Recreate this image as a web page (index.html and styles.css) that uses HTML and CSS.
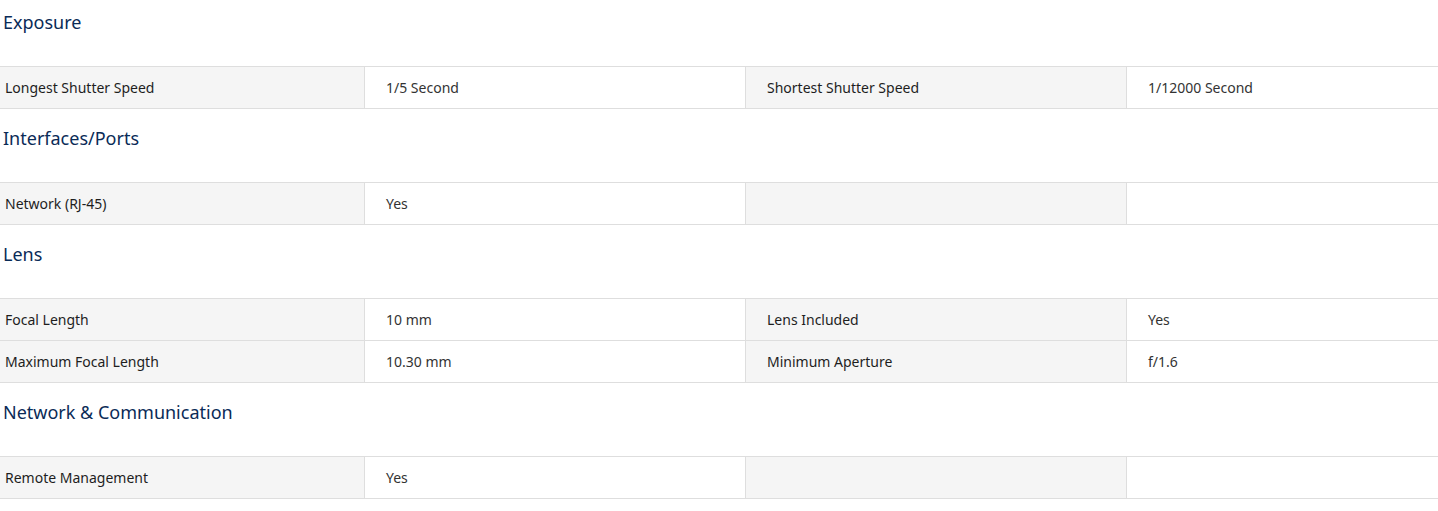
FILE: index.html
```html
<!DOCTYPE html>
<html lang="en">
<head>
<meta charset="utf-8">
<title>Specifications</title>
<link rel="stylesheet" href="styles.css">
</head>
<body>
<div class="specs">
  <section class="group">
    <h3 class="group-title">Exposure</h3>
    <div class="grid">
      <div class="cell label first">Longest Shutter Speed</div>
      <div class="cell value">1/5 Second</div>
      <div class="cell label">Shortest Shutter Speed</div>
      <div class="cell value last">1/12000 Second</div>
    </div>
  </section>
  <section class="group">
    <h3 class="group-title">Interfaces/Ports</h3>
    <div class="grid">
      <div class="cell label first">Network (RJ-45)</div>
      <div class="cell value">Yes</div>
      <div class="cell label"></div>
      <div class="cell value last"></div>
    </div>
  </section>
  <section class="group">
    <h3 class="group-title">Lens</h3>
    <div class="grid">
      <div class="cell label first">Focal Length</div>
      <div class="cell value">10 mm</div>
      <div class="cell label">Lens Included</div>
      <div class="cell value last">Yes</div>
      <div class="cell label first">Maximum Focal Length</div>
      <div class="cell value">10.30 mm</div>
      <div class="cell label">Minimum Aperture</div>
      <div class="cell value last">f/1.6</div>
    </div>
  </section>
  <section class="group">
    <h3 class="group-title">Network &amp; Communication</h3>
    <div class="grid">
      <div class="cell label first">Remote Management</div>
      <div class="cell value">Yes</div>
      <div class="cell label"></div>
      <div class="cell value last"></div>
    </div>
  </section>
</div>
</body>
</html>
```
FILE: styles.css
```css
html, body {
  margin: 0;
  padding: 0;
  background: #ffffff;
  overflow: hidden;
}

body {
  font-family: "Noto Sans", "Open Sans", sans-serif;
  color: #2b2b2b;
}

.group + .group {
  margin-top: 7px;
}

.group-title {
  margin: 0 0 32px 0;
  padding: 10px 3px 0 3px;
  font-size: 18px;
  line-height: 24px;
  font-weight: 400;
  color: #0a2b57;
}

.grid {
  display: grid;
  grid-template-columns: 365px 381px 381px 1fr;
  border-top: 1px solid #dedede;
}

.cell {
  height: 41px;
  display: flex;
  align-items: center;
  padding-left: 21px;
  font-size: 14px;
  border-bottom: 1px solid #dedede;
  border-right: 1px solid #dedede;
  box-sizing: content-box;
}

.cell.label {
  background: #f5f5f5;
  color: #1e1e1e;
  font-weight: 400;
}

.cell.value {
  background: #ffffff;
  color: #333333;
}

.cell.first {
  padding-left: 5px;
}

.cell.last {
  border-right: none;
}
```
